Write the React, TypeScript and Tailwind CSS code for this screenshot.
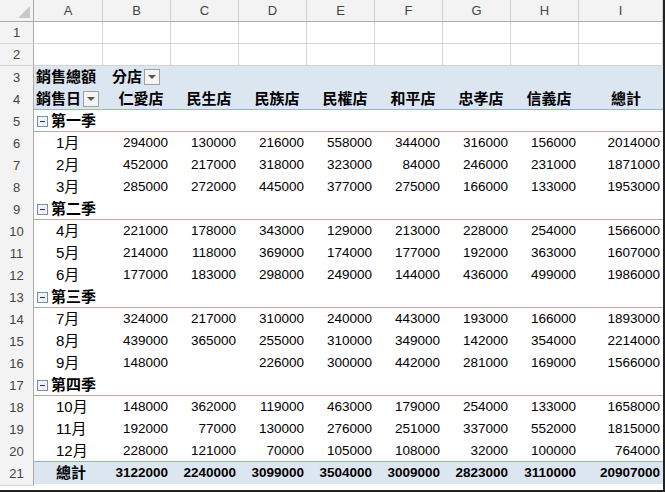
import React from "react";

const cols = ["A","B","C","D","E","F","G","H","I"];
const stores = ["仁愛店","民生店","民族店","民權店","和平店","忠孝店","信義店","總計"];
type R = { n: number; kind: "blank"|"h3"|"h4"|"q"|"m"|"t"; label?: string; vals?: (string)[] };
const rows: R[] = [
  {n:1,kind:"blank"},{n:2,kind:"blank"},{n:3,kind:"h3"},{n:4,kind:"h4"},
  {n:5,kind:"q",label:"第一季"},
  {n:6,kind:"m",label:"1月",vals:["294000","130000","216000","558000","344000","316000","156000","2014000"]},
  {n:7,kind:"m",label:"2月",vals:["452000","217000","318000","323000","84000","246000","231000","1871000"]},
  {n:8,kind:"m",label:"3月",vals:["285000","272000","445000","377000","275000","166000","133000","1953000"]},
  {n:9,kind:"q",label:"第二季"},
  {n:10,kind:"m",label:"4月",vals:["221000","178000","343000","129000","213000","228000","254000","1566000"]},
  {n:11,kind:"m",label:"5月",vals:["214000","118000","369000","174000","177000","192000","363000","1607000"]},
  {n:12,kind:"m",label:"6月",vals:["177000","183000","298000","249000","144000","436000","499000","1986000"]},
  {n:13,kind:"q",label:"第三季"},
  {n:14,kind:"m",label:"7月",vals:["324000","217000","310000","240000","443000","193000","166000","1893000"]},
  {n:15,kind:"m",label:"8月",vals:["439000","365000","255000","310000","349000","142000","354000","2214000"]},
  {n:16,kind:"m",label:"9月",vals:["148000","","226000","300000","442000","281000","169000","1566000"]},
  {n:17,kind:"q",label:"第四季"},
  {n:18,kind:"m",label:"10月",vals:["148000","362000","119000","463000","179000","254000","133000","1658000"]},
  {n:19,kind:"m",label:"11月",vals:["192000","77000","130000","276000","251000","337000","552000","1815000"]},
  {n:20,kind:"m",label:"12月",vals:["228000","121000","70000","105000","108000","32000","100000","764000"]},
  {n:21,kind:"t",label:"總計",vals:["3122000","2240000","3099000","3504000","3009000","2823000","3110000","20907000"]},
];

const grid = "grid grid-cols-[34px_69px_68px_68px_68px_68px_68px_68px_68px_1fr]";
const Drop = () => (
  <span className="inline-flex w-[16px] h-[16px] border border-[#a0a0a0] bg-[#f4f4f4] items-center justify-center ml-[2px]">
    <svg width="8" height="5" viewBox="0 0 8 5"><path d="M0 0h8L4 4z" fill="#555"/></svg>
  </span>
);

export default function App() {
  return (
    <div className="w-[665px] h-[492px] overflow-hidden bg-white border-r-2 border-b-2 border-[#222] text-[13.5px] text-black" style={{fontFamily:'"Liberation Sans","Noto Sans CJK TC",sans-serif'}}>
      <div className={`${grid} h-[22px] bg-[#f3f3f3] border-b border-[#ababab] text-[#444]`}>
        <div className="border-r border-[#ababab] relative">
          <svg className="absolute right-[3px] bottom-[3px]" width="12" height="12"><path d="M12 0V12H0z" fill="#c9c9c9"/></svg>
        </div>
        {cols.map(c => <div key={c} className="border-r border-[#d0d0d0] flex items-center justify-center text-[13px]">{c}</div>)}
      </div>
      {rows.map(r => {
        const pivot = r.n >= 3;
        const blue = r.kind === "h3" || r.kind === "h4" || r.kind === "t";
        const bottomLine = r.kind === "h4" || r.kind === "q" || r.n === 20;
        return (
          <div key={r.n} className={`${grid} h-[22px] ${bottomLine ? "border-b border-[#95b3d7]" : pivot ? "border-b border-transparent" : "border-b border-[#d4d4d4]"} ${blue ? "bg-[#dce6f1]" : ""} ${r.kind==="t"?"font-bold":""}`}>
            <div className="bg-[#f3f3f3] border-r border-[#ababab] flex items-center justify-center text-[#444] text-[13px] -mb-px border-b border-b-[#d4d4d4] font-normal">{r.n}</div>
            {r.kind === "blank" && cols.map(c => <div key={c} className="border-r border-[#d4d4d4]" />)}
            {r.kind === "h3" && <>
              <div className="col-span-2 flex items-center pl-[2px] font-bold whitespace-nowrap text-[15px]">銷售總額<span className="ml-[16px]">分店</span><Drop /></div>
            </>}
            {r.kind === "h4" && <>
              <div className="flex items-center pl-[2px] font-bold whitespace-nowrap text-[15px]">銷售日<Drop /></div>
              {stores.map((s,i) => <div key={s} className={`flex items-center font-bold text-[15px] ${i===7?"justify-center pl-[10px]":"justify-center pl-[8px]"}`}>{s}</div>)}
            </>}
            {r.kind === "q" && <div className="col-span-3 flex items-center pl-[3px] font-bold text-[15px]">
              <span className="w-[11px] h-[11px] border border-[#7a8ea8] bg-[#eef2f8] mr-[3px] flex items-center justify-center"><span className="w-[5px] h-[1px] bg-[#334]" /></span>{r.label}</div>}
            {(r.kind === "m" || r.kind === "t") && <>
              <div className={`flex items-center pl-[22px] text-[15px]`}>{r.label}</div>
              {r.vals!.map((v,i) => <div key={i} className="flex items-center justify-end pr-[3px]">{v}</div>)}
            </>}
          </div>
        );
      })}
    </div>
  );
}
